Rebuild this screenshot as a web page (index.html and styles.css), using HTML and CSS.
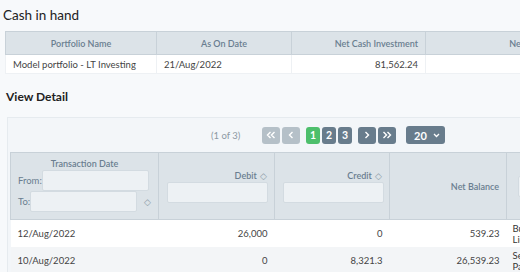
FILE: index.html
```html
<!DOCTYPE html>
<html lang="en">
  <head>
    <meta charset="UTF-8" />
    <title>Cash in hand</title>
    <link rel="stylesheet" href="styles.css">
  </head>
  <body>
    <h2 class="title">Cash in hand</h2>
    <table class="grid summary">
      <colgroup>
        <col style="width: 151px" />
        <col style="width: 135px" />
        <col style="width: 134px" />
        <col style="width: 161px" />
      </colgroup>
      <thead>
        <tr>
          <th class="center">Portfolio Name</th>
          <th class="center">As On Date</th>
          <th class="right">Net Cash Investment</th>
          <th class="right">Net Cash Balance</th>
        </tr>
      </thead>
      <tbody>
        <tr>
          <td>Model portfolio - LT Investing</td>
          <td>21/Aug/2022</td>
          <td class="right">81,562.24</td>
          <td class="right">539.23</td>
        </tr>
      </tbody>
    </table>

    <h3 class="subtitle">View Detail</h3>
    <div class="panel">
      <div class="paginator">
        <span class="current">(1 of 3)</span>
        <span class="pbtn off">
          <svg width="10" height="8" viewBox="0 0 10 8"><path d="M4.5 1L1.5 4l3 3M8.5 1l-3 3 3 3" fill="none" stroke="#fff" stroke-width="1.4"/></svg>
        </span>
        <span class="pbtn off">
          <svg width="6" height="8" viewBox="0 0 6 8"><path d="M4.5 1L1.5 4l3 3" fill="none" stroke="#fff" stroke-width="1.4"/></svg>
        </span>
        <span class="pages">
          <span class="pbtn num on">1</span>
          <span class="pbtn num">2</span>
          <span class="pbtn num">3</span>
        </span>
        <span class="pbtn">
          <svg width="6" height="8" viewBox="0 0 6 8"><path d="M1.5 1l3 3-3 3" fill="none" stroke="#fff" stroke-width="1.4"/></svg>
        </span>
        <span class="pbtn">
          <svg width="10" height="8" viewBox="0 0 10 8"><path d="M1.5 1l3 3-3 3M5.5 1l3 3-3 3" fill="none" stroke="#fff" stroke-width="1.4"/></svg>
        </span>
        <span class="rows">20
          <svg width="7" height="5" viewBox="0 0 7 5"><path d="M1 1l2.5 2.5L6 1" fill="none" stroke="#fff" stroke-width="1.3"/></svg>
        </span>
      </div>
      <table class="grid detail">
        <colgroup>
          <col style="width: 148px" />
          <col style="width: 116px" />
          <col style="width: 115px" />
          <col style="width: 117px" />
          <col style="width: 140px" />
        </colgroup>
        <thead>
          <tr>
            <th class="datecol">
              <div class="center lbl">Transaction Date</div>
              <div class="frow"><label>From:</label><span class="box"></span></div>
              <div class="frow"><label>To:</label><span class="box"></span><span class="sort">&#9671;</span></div>
            </th>
            <th class="right filter">
              <div class="lbl">Debit <span class="sort">&#9671;</span></div>
              <span class="box full"></span>
            </th>
            <th class="right filter">
              <div class="lbl">Credit <span class="sort">&#9671;</span></div>
              <span class="box full"></span>
            </th>
            <th class="right">Net Balance</th>
            <th class="left"><span class="box full"></span></th>
          </tr>
        </thead>
        <tbody>
          <tr>
            <td>12/Aug/2022</td>
            <td class="right">26,000</td>
            <td class="right">0</td>
            <td class="right">539.23</td>
            <td class="narr">Buy<br />Liquid</td>
          </tr>
          <tr class="alt">
            <td>10/Aug/2022</td>
            <td class="right">0</td>
            <td class="right">8,321.3</td>
            <td class="right">26,539.23</td>
            <td class="narr">Sell<br />Payout</td>
          </tr>
        </tbody>
      </table>
    </div>
  </body>
</html>
```

FILE: styles.css
```css
body {
  margin: 0;
  background-color: #f7f9fb;
  font-family: Lato, "Open Sans", sans-serif;
  font-size: 9.5px;
  color: #444;
  width: 520px;
  height: 272px;
  overflow: hidden;
}

.title {
  margin: 0;
  padding: 7px 0 0 3px;
  height: 24px;
  box-sizing: border-box;
  font-size: 13.5px;
  font-weight: 400;
  color: #222;
}

.grid {
  border-collapse: collapse;
  table-layout: fixed;
  white-space: nowrap;
}

.grid th {
  background-color: #dce3e8;
  color: #6a7e90;
  font-size: 9px;
  font-weight: 600;
  border: 1px solid #c8d1d8;
  padding: 0 7px;
  overflow: hidden;
}

.grid td {
  padding: 0 7px;
  overflow: hidden;
}

.center {
  text-align: center;
}
.right {
  text-align: right;
}
.left {
  text-align: left;
}

.summary {
  width: 581px;
  margin: 7px 0 0 5px;
  background-color: #fff;
}
.summary th {
  height: 22px;
}
.summary td {
  height: 18px;
  border: 1px solid #eef1f4;
  border-top: none;
}

.subtitle {
  margin: 0;
  padding: 15px 0 0 6px;
  height: 43px;
  box-sizing: border-box;
  font-size: 12px;
  font-weight: 700;
  color: #222;
}

.panel {
  width: 600px;
  margin-left: 7px;
  border: 1px solid #e6ebef;
  border-right: none;
  background-color: #f3f6f9;
  padding: 0 0 0 2px;
}

.paginator {
  display: flex;
  align-items: center;
  height: 34px;
  padding-left: 201px;
  gap: 2px;
}

.current {
  color: #8c99a4;
  width: 49px;
}

.pbtn {
  display: inline-flex;
  align-items: center;
  justify-content: center;
  width: 18px;
  height: 17px;
  border-radius: 3px;
  background-color: #687c8c;
  color: #fff;
  font-weight: 700;
  font-size: 12px;
}
.pbtn.off {
  background-color: #b5c0c8;
}
.pages {
  display: flex;
  gap: 2px;
  margin: 0 4px;
}
.pbtn.num {
  width: 14px;
  font-size: 10.5px;
}
.pbtn.on {
  background-color: #4dbf6c;
}

.rows {
  display: inline-flex;
  align-items: center;
  justify-content: space-between;
  box-sizing: border-box;
  width: 39px;
  height: 18px;
  margin-left: 8px;
  padding: 0 5px 0 8px;
  border-radius: 3px;
  background-color: #687c8c;
  color: #fff;
  font-weight: 700;
  font-size: 11px;
}

.detail {
  width: 636px;
}
.detail th {
  height: 67px;
  box-sizing: border-box;
  vertical-align: middle;
}
.detail th.datecol {
  vertical-align: top;
  padding-top: 5px;
}
.detail th.filter {
  vertical-align: top;
  padding-top: 17px;
}
.detail td {
  height: 27px;
  background-color: #fff;
  color: #444;
}
.detail tr.alt td {
  background-color: #f3f5f7;
}
.detail td.narr {
  padding: 0 6px;
  line-height: 11px;
  color: #333;
}

.lbl {
  line-height: 11px;
}

.frow {
  display: flex;
  align-items: center;
}
.frow:nth-child(2) {
  margin-top: 1px;
}
.frow label {
  font-size: 9.5px;
  font-weight: 400;
  color: #6a7e90;
  text-align: left;
}

.box {
  display: block;
  height: 21px;
  background-color: #edf1f4;
  border: 1px solid #d3dbe1;
  border-radius: 2px;
  box-sizing: border-box;
}
.frow .box {
  width: 107px;
}
.box.full {
  width: 101px;
  margin: 1px 0 0 1px;
}
th.left .box.full {
  margin: 0 0 0 4px;
}

.sort {
  font-weight: 400;
  font-size: 9px;
  color: #8a9aa7;
  margin-left: 1px;
}
.frow .sort {
  margin-left: 7px;
}
```
